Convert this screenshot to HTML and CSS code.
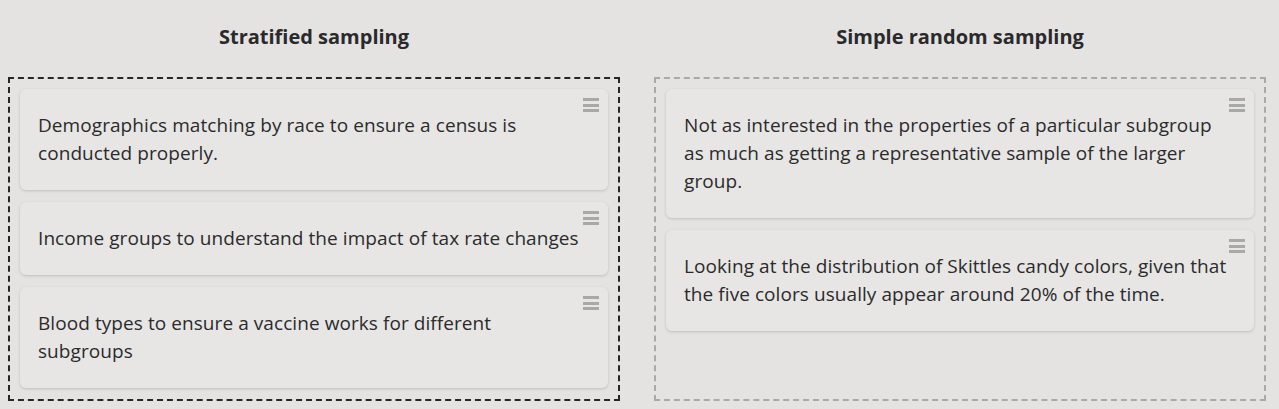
FILE: index.html
```html
<!DOCTYPE html>
<html lang="en">
<head>
<meta charset="utf-8">
<title>Sampling categories</title>
<link rel="stylesheet" href="styles.css">
</head>
<body>
<div class="board">
  <section class="column">
    <h2 class="column-title">Stratified sampling</h2>
    <div class="dropzone dropzone-active">
      <div class="card">
        <span class="handle"><i></i><i></i><i></i></span>
        <p>Demographics matching by race to ensure a census is<br>conducted properly.</p>
      </div>
      <div class="card">
        <span class="handle"><i></i><i></i><i></i></span>
        <p>Income groups to understand the impact of tax rate changes</p>
      </div>
      <div class="card">
        <span class="handle"><i></i><i></i><i></i></span>
        <p>Blood types to ensure a vaccine works for different<br>subgroups</p>
      </div>
    </div>
  </section>
  <section class="column">
    <h2 class="column-title">Simple random sampling</h2>
    <div class="dropzone">
      <div class="card">
        <span class="handle"><i></i><i></i><i></i></span>
        <p>Not as interested in the properties of a particular subgroup<br>as much as getting a representative sample of the larger<br>group.</p>
      </div>
      <div class="card">
        <span class="handle"><i></i><i></i><i></i></span>
        <p>Looking at the distribution of Skittles candy colors, given that<br>the five colors usually appear around 20% of the time.</p>
      </div>
    </div>
  </section>
</div>
</body>
</html>
```
FILE: styles.css
```css
html, body {
  margin: 0;
  padding: 0;
  background: #e4e3e1;
}
body {
  font-family: "Open Sans", "Noto Sans", sans-serif;
  color: #2b2b2d;
}
.board {
  display: grid;
  grid-template-columns: 612px 612px;
  column-gap: 34px;
  padding: 23px 0 8px 8px;
}
.column {
  display: flex;
  flex-direction: column;
}
.column-title {
  margin: 0 0 26px;
  font-size: 20px;
  line-height: 28px;
  font-weight: 700;
  text-align: center;
  color: #2a2a2c;
}
.dropzone {
  height: 324px;
  box-sizing: border-box;
  border: 2px dashed #a9a9a9;
  padding: 10px;
  display: flex;
  flex-direction: column;
  gap: 12px;
}
.dropzone-active {
  border-color: #262626;
}
.card {
  position: relative;
  background: #e7e6e4;
  border-radius: 6px;
  box-shadow: 0 1px 3px rgba(0, 0, 0, 0.16);
  padding: 22px 18px 23px;
}
.card p {
  margin: 0;
  font-size: 19px;
  line-height: 28px;
  letter-spacing: 0.07px;
  white-space: nowrap;
}
.handle {
  position: absolute;
  top: 9px;
  right: 9px;
  width: 16px;
  display: flex;
  flex-direction: column;
  gap: 2.5px;
}
.handle i {
  display: block;
  height: 3px;
  background: #a8a8a8;
}
```
